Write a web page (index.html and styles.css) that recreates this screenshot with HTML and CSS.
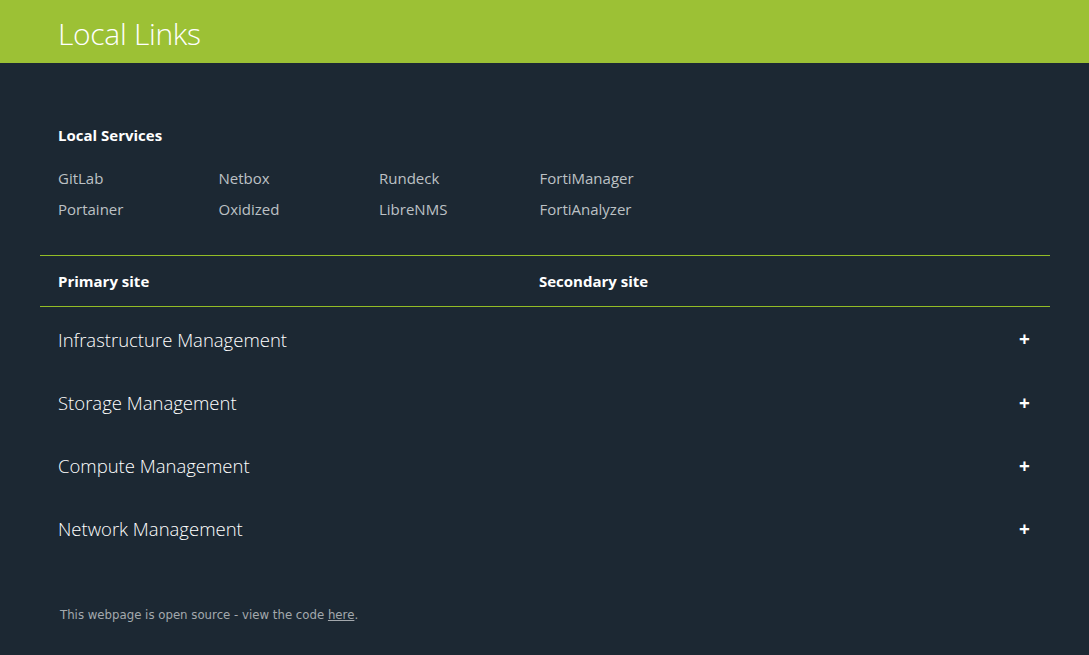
FILE: index.html
```html
<!DOCTYPE html>
<html lang="en">
<head>
<meta charset="utf-8">
<title>Local Links</title>
<link rel="stylesheet" href="styles.css">
</head>
<body>
<header class="topbar">
  <h1 class="title">Local Links</h1>
</header>
<main class="container">
  <section class="services">
    <h2 class="section-title">Local Services</h2>
    <div class="link-grid">
      <a class="svc" href="#">GitLab</a>
      <a class="svc" href="#">Netbox</a>
      <a class="svc" href="#">Rundeck</a>
      <a class="svc" href="#">FortiManager</a>
      <a class="svc" href="#">Portainer</a>
      <a class="svc" href="#">Oxidized</a>
      <a class="svc" href="#">LibreNMS</a>
      <a class="svc" href="#">FortiAnalyzer</a>
    </div>
  </section>
  <div class="sites">
    <div class="site">Primary site</div>
    <div class="site">Secondary site</div>
  </div>
  <div class="accordion">
    <div class="acc-row"><span class="acc-label">Infrastructure Management</span><span class="acc-plus">+</span></div>
    <div class="acc-row"><span class="acc-label">Storage Management</span><span class="acc-plus">+</span></div>
    <div class="acc-row"><span class="acc-label">Compute Management</span><span class="acc-plus">+</span></div>
    <div class="acc-row"><span class="acc-label">Network Management</span><span class="acc-plus">+</span></div>
  </div>
  <footer class="footer">This webpage is open source - view the code <a href="#" class="footer-link">here</a>.</footer>
</main>
</body>
</html>
```
FILE: styles.css
```css
html, body {
  margin: 0;
  padding: 0;
}
body {
  background: #1c2833;
  font-family: "Open Sans", "Noto Sans", sans-serif;
  color: #ffffff;
  min-height: 655px;
}
.topbar {
  background: #9cc135;
  height: 63px;
  padding: 0 58px;
  display: flex;
  align-items: center;
}
.title {
  margin: 0;
  font-weight: 300;
  font-size: 30px;
  line-height: 40px;
  color: #ffffff;
  letter-spacing: -0.3px;
  padding-top: 4px;
}
.container {
  margin: 0 39px 0 40px;
}
.services {
  padding: 62px 18px 36px;
}
.section-title {
  margin: 0 0 23px;
  font-size: 15px;
  font-weight: 700;
  line-height: 20px;
}
.link-grid {
  display: grid;
  grid-template-columns: repeat(4, 160.5px);
  row-gap: 11px;
}
.svc {
  color: #bcc1c5;
  text-decoration: none;
  font-size: 15px;
  line-height: 20px;
}
.sites {
  display: grid;
  grid-template-columns: 481px 1fr;
  border-top: 1px solid #93bc26;
  border-bottom: 1px solid #93bc26;
  padding: 0 18px;
  height: 50px;
  align-items: center;
}
.site {
  font-weight: 700;
  font-size: 15px;
}
.accordion {
  display: flex;
  flex-direction: column;
}
.acc-row {
  height: 63px;
  display: flex;
  align-items: center;
  justify-content: space-between;
  padding: 0 20px 0 18px;
}
.acc-row:first-child {
  height: 64px;
}
.acc-label {
  font-weight: 300;
  font-size: 18.5px;
  color: #ffffff;
}
.acc-plus {
  font-weight: 700;
  font-size: 19px;
  width: 11px;
  text-align: center;
}
.footer {
  padding: 48px 20px 0;
  font-family: "DejaVu Sans", sans-serif;
  font-size: 11.75px;
  color: #a3a8ad;
}
.footer-link {
  color: #a3a8ad;
  text-decoration: underline;
}
```
